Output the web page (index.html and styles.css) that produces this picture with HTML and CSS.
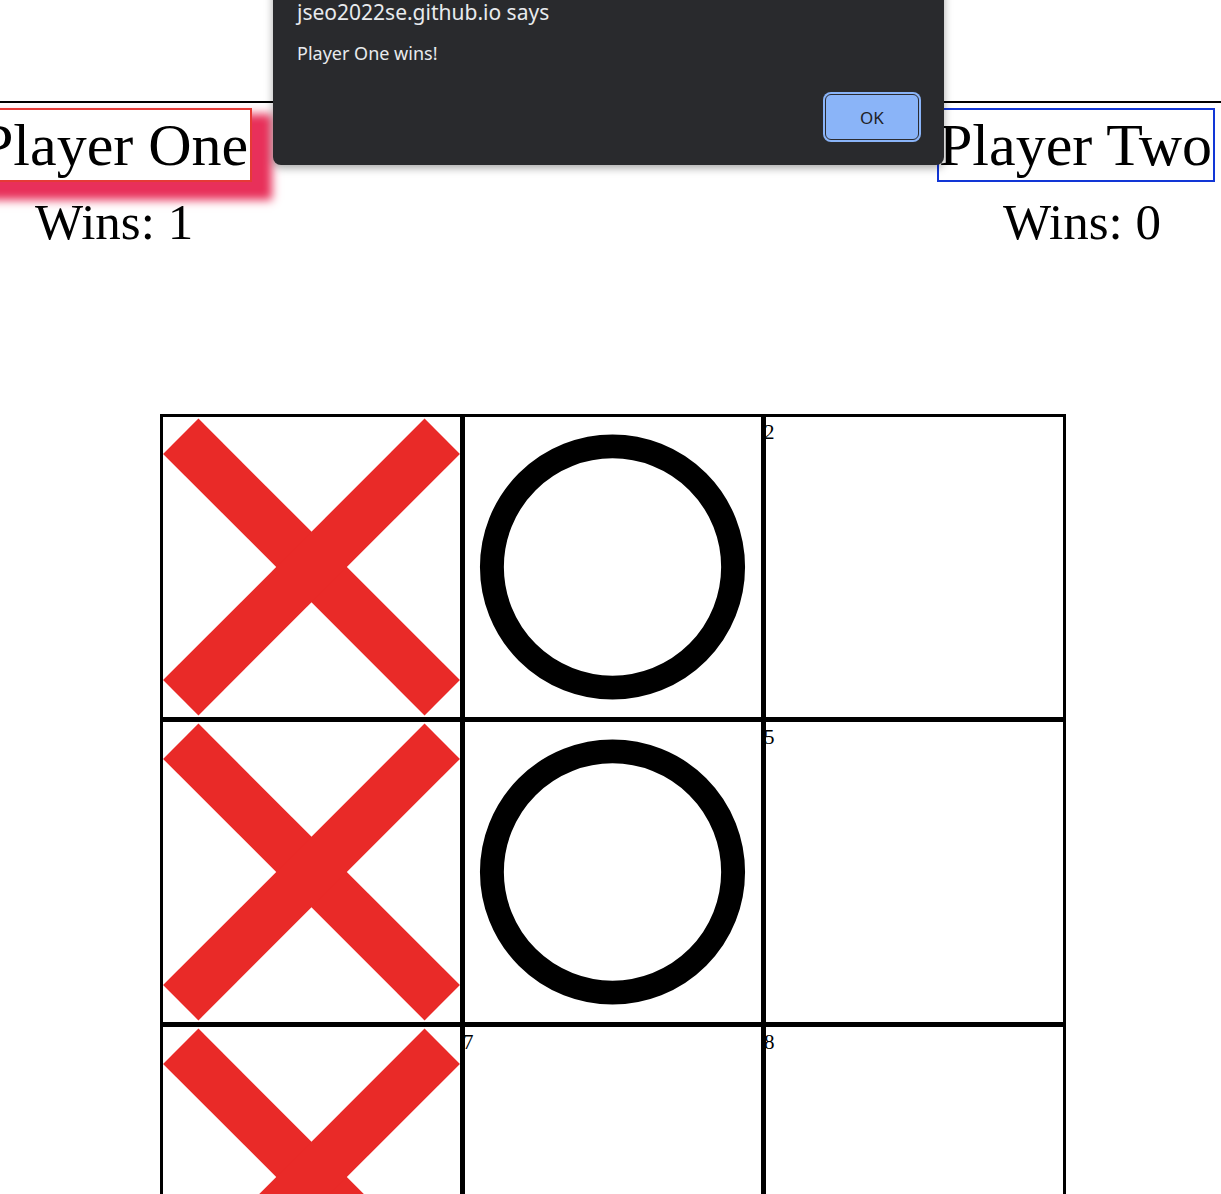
FILE: index.html
```html
<!DOCTYPE html>
<html lang="en">
<head>
<meta charset="utf-8">
<title>Tic Tac Toe</title>
<link rel="stylesheet" href="styles.css">
</head>
<body>
<div class="alert" role="alertdialog">
  <div class="alert-title">jseo2022se.github.io says</div>
  <div class="alert-msg">Player One wins!</div>
  <div class="alert-actions"><button class="ok">OK</button></div>
</div>

<header class="top"></header>

<section class="players">
  <div class="player p1">
    <div class="name active">Player One</div>
    <div class="wins">Wins: 1</div>
  </div>
  <div class="player p2">
    <div class="name">Player Two</div>
    <div class="wins">Wins: 0</div>
  </div>
</section>

<main class="board">
  <div class="cell">
    <svg class="mark" viewBox="0 0 297 300"><line x1="17.75" y1="19.25" x2="279.25" y2="280.75"/><line x1="279.25" y1="19.25" x2="17.75" y2="280.75"/></svg>
  </div>
  <div class="cell">
    <svg class="mark o" viewBox="0 0 297 300"><circle cx="148" cy="150" r="121"/></svg>
  </div>
  <div class="cell"><span class="num">2</span></div>
  <div class="cell">
    <svg class="mark" viewBox="0 0 297 300"><line x1="17.75" y1="19.25" x2="279.25" y2="280.75"/><line x1="279.25" y1="19.25" x2="17.75" y2="280.75"/></svg>
  </div>
  <div class="cell">
    <svg class="mark o" viewBox="0 0 297 300"><circle cx="148" cy="150" r="121"/></svg>
  </div>
  <div class="cell"><span class="num">5</span></div>
  <div class="cell">
    <svg class="mark" viewBox="0 0 297 300"><line x1="17.75" y1="19.25" x2="279.25" y2="280.75"/><line x1="279.25" y1="19.25" x2="17.75" y2="280.75"/></svg>
  </div>
  <div class="cell"><span class="num">7</span></div>
  <div class="cell"><span class="num">8</span></div>
</main>
</body>
</html>
```

FILE: styles.css
```css
html, body {
  margin: 0;
  padding: 0;
  background: #ffffff;
}

body {
  font-family: "Liberation Serif", "Times New Roman", serif;
  color: #000;
  overflow: hidden;
}

.top {
  height: 101px;
  border-bottom: 2px solid #000;
}

.players {
  display: flex;
  justify-content: space-between;
  align-items: flex-start;
  margin-top: 5px;
  padding-right: 6px;
}

.player {
  display: flex;
  flex-direction: column;
  align-items: center;
}

.p1 {
  margin-left: -24px;
}

.name {
  font-size: 60px;
  line-height: 70px;
  padding: 0 2px;
  border: 2px solid #1236d6;
  white-space: nowrap;
}

.p2 .name {
  padding: 0 1px 0 0;
}

.name.active {
  border-color: #e53a36;
  box-shadow: 14px 12px 9px 6px #e8305a;
}

.wins {
  font-size: 51px;
  line-height: 57px;
  margin-top: 12px;
  white-space: nowrap;
}

.p2 .wins {
  padding-left: 12px;
}

.board {
  display: grid;
  grid-template-columns: 297px 296px 297px;
  grid-auto-rows: 300px;
  gap: 5px;
  padding: 3px;
  background: #000;
  width: max-content;
  margin: 163px 0 0 160px;
}

.cell {
  background: #fff;
  position: relative;
  overflow: visible;
}

.num {
  display: block;
  font-size: 21px;
  line-height: 24px;
  margin: 3px 0 0 -2px;
}

.mark {
  display: block;
  width: 100%;
  height: 100%;
}

.mark line {
  stroke: #e92a28;
  stroke-width: 50;
}

.mark.o circle {
  fill: none;
  stroke: #000;
  stroke-width: 24;
}

/* browser alert overlay */
.alert {
  position: absolute;
  left: 273px;
  top: -12px;
  width: 671px;
  box-sizing: border-box;
  padding: 0 23px 23px 24px;
  background: #292a2d;
  border-radius: 0 0 8px 8px;
  box-shadow: 0 3px 8px rgba(0, 0, 0, 0.35);
  font-family: "Noto Sans", "Open Sans", sans-serif;
  color: #e8eaed;
  z-index: 10;
}

.alert-title {
  font-size: 21px;
  line-height: 28px;
  padding-top: 10px;
}

.alert-msg {
  font-size: 18px;
  line-height: 24px;
  margin-top: 15px;
}

.alert-actions {
  display: flex;
  justify-content: flex-end;
  margin-top: 27px;
}

.ok {
  width: 94px;
  height: 46px;
  box-sizing: border-box;
  margin: 2px;
  border: 1px solid #2a2b30;
  border-radius: 6px;
  background: #8ab4f8;
  box-shadow: 0 0 0 2px #8ab4f8;
  color: #202124;
  font-family: "Noto Sans", "Open Sans", sans-serif;
  font-size: 17px;
  padding: 0;
}
```
